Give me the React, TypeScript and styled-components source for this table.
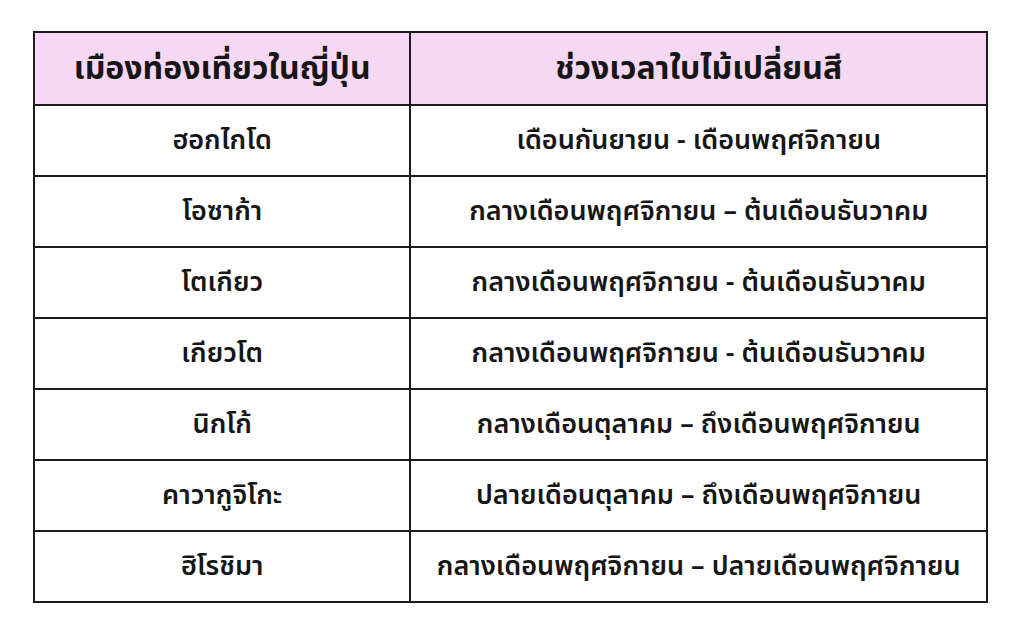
import React from "react";
import styled, { createGlobalStyle } from "styled-components";

const GlobalStyle = createGlobalStyle`
  html, body {
    margin: 0;
    padding: 0;
    background: #ffffff;
  }
  body {
    font-family: "Noto Sans Thai", "Noto Sans Thai UI", "Noto Sans", "DejaVu Sans", sans-serif;
    color: #161616;
  }
`;

const Page = styled.div`
  width: 1024px;
  height: 628px;
  padding: 31px 36px 0 33px;
  box-sizing: border-box;
`;

const Table = styled.table`
  width: 100%;
  border-collapse: collapse;
  border: 2px solid #1c1c1c;
  table-layout: fixed;
`;

const HeadCell = styled.th`
  height: 71px;
  background: #f6d8f5;
  border: 2px solid #1c1c1c;
  font-size: 32px;
  font-weight: 700;
  text-align: center;
  vertical-align: middle;
  padding: 0;
  line-height: 1;
`;

const Cell = styled.td`
  height: 69px;
  border: 2px solid #1c1c1c;
  font-size: 27px;
  font-weight: 600;
  text-align: center;
  vertical-align: middle;
  padding: 0;
  line-height: 1;
`;

const rows: [string, string][] = [
  ["ฮอกไกโด", "เดือนกันยายน - เดือนพฤศจิกายน"],
  ["โอซาก้า", "กลางเดือนพฤศจิกายน – ต้นเดือนธันวาคม"],
  ["โตเกียว", "กลางเดือนพฤศจิกายน - ต้นเดือนธันวาคม"],
  ["เกียวโต", "กลางเดือนพฤศจิกายน - ต้นเดือนธันวาคม"],
  ["นิกโก้", "กลางเดือนตุลาคม – ถึงเดือนพฤศจิกายน"],
  ["คาวากูจิโกะ", "ปลายเดือนตุลาคม – ถึงเดือนพฤศจิกายน"],
  ["ฮิโรชิมา", "กลางเดือนพฤศจิกายน – ปลายเดือนพฤศจิกายน"],
];

const App = () => {
  return (
    <Page>
      <GlobalStyle />
      <Table>
        <colgroup>
          <col style={{ width: "39.5%" }} />
          <col />
        </colgroup>
        <thead>
          <tr>
            <HeadCell>เมืองท่องเที่ยวในญี่ปุ่น</HeadCell>
            <HeadCell>ช่วงเวลาใบไม้เปลี่ยนสี</HeadCell>
          </tr>
        </thead>
        <tbody>
          {rows.map(([city, period]) => (
            <tr key={city}>
              <Cell>{city}</Cell>
              <Cell>{period}</Cell>
            </tr>
          ))}
        </tbody>
      </Table>
    </Page>
  );
};

export default App;
